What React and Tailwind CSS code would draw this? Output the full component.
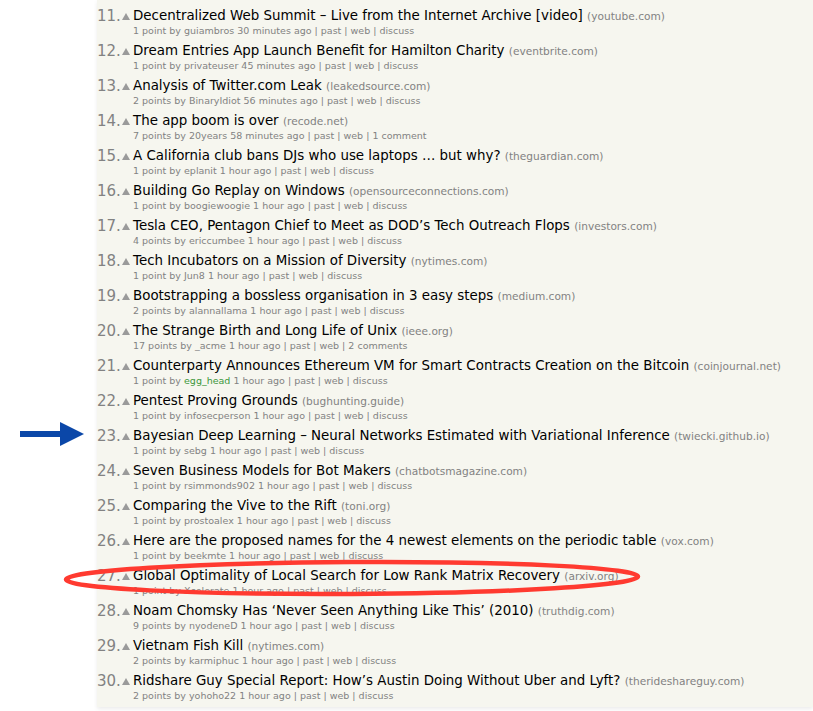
import React from "react";

const items = [
  [11, "Decentralized Web Summit – Live from the Internet Archive [video]", "youtube.com", "1 point", "guiambros", "30 minutes ago", "discuss"],
  [12, "Dream Entries App Launch Benefit for Hamilton Charity", "eventbrite.com", "1 point", "privateuser", "45 minutes ago", "discuss"],
  [13, "Analysis of Twitter.com Leak", "leakedsource.com", "2 points", "BinaryIdiot", "56 minutes ago", "discuss"],
  [14, "The app boom is over", "recode.net", "7 points", "20years", "58 minutes ago", "1 comment"],
  [15, "A California club bans DJs who use laptops … but why?", "theguardian.com", "1 point", "eplanit", "1 hour ago", "discuss"],
  [16, "Building Go Replay on Windows", "opensourceconnections.com", "1 point", "boogiewoogie", "1 hour ago", "discuss"],
  [17, "Tesla CEO, Pentagon Chief to Meet as DOD’s Tech Outreach Flops", "investors.com", "4 points", "ericcumbee", "1 hour ago", "discuss"],
  [18, "Tech Incubators on a Mission of Diversity", "nytimes.com", "1 point", "Jun8", "1 hour ago", "discuss"],
  [19, "Bootstrapping a bossless organisation in 3 easy steps", "medium.com", "2 points", "alannallama", "1 hour ago", "discuss"],
  [20, "The Strange Birth and Long Life of Unix", "ieee.org", "17 points", "_acme", "1 hour ago", "2 comments"],
  [21, "Counterparty Announces Ethereum VM for Smart Contracts Creation on the Bitcoin", "coinjournal.net", "1 point", "egg_head", "1 hour ago", "discuss", true],
  [22, "Pentest Proving Grounds", "bughunting.guide", "1 point", "infosecperson", "1 hour ago", "discuss"],
  [23, "Bayesian Deep Learning – Neural Networks Estimated with Variational Inference", "twiecki.github.io", "1 point", "sebg", "1 hour ago", "discuss"],
  [24, "Seven Business Models for Bot Makers", "chatbotsmagazine.com", "1 point", "rsimmonds902", "1 hour ago", "discuss"],
  [25, "Comparing the Vive to the Rift", "toni.org", "1 point", "prostoalex", "1 hour ago", "discuss"],
  [26, "Here are the proposed names for the 4 newest elements on the periodic table", "vox.com", "1 point", "beekmte", "1 hour ago", "discuss"],
  [27, "Global Optimality of Local Search for Low Rank Matrix Recovery", "arxiv.org", "1 point", "Xcelerate", "1 hour ago", "discuss"],
  [28, "Noam Chomsky Has ‘Never Seen Anything Like This’ (2010)", "truthdig.com", "9 points", "nyodeneD", "1 hour ago", "discuss"],
  [29, "Vietnam Fish Kill", "nytimes.com", "2 points", "karmiphuc", "1 hour ago", "discuss"],
  [30, "Ridshare Guy Special Report: How’s Austin Doing Without Uber and Lyft?", "therideshareguy.com", "2 points", "yohoho22", "1 hour ago", "discuss"],
];

function Row({ item }) {
  const [rank, title, site, points, user, age, comments, isNew] = item;
  return (
    <div className="flex h-[35px]">
      <div className="w-[22px] text-right text-[15px] leading-[18px] text-[#828282]">{rank}.</div>
      <div className="w-[14px] flex justify-center pt-[6px]">
        <svg width="8" height="7" viewBox="0 0 8 7">
          <polygon points="4,0 8,7 0,7" fill="#9a9a9a" />
        </svg>
      </div>
      <div className="flex flex-col">
        <div className="h-[18px] text-[13.4px] leading-[18px] text-black whitespace-nowrap">
          {title} <span className="text-[10.6px] text-[#828282]">({site})</span>
        </div>
        <div className="h-[12px] text-[9.5px] leading-[12px] text-[#828282] whitespace-nowrap">
          {points} by <span className={isNew ? "text-[#3c963c]" : ""}>{user}</span> {age} | past | web | {comments}
        </div>
      </div>
    </div>
  );
}

export default function App() {
  return (
    <div className="relative h-[711px] overflow-hidden bg-white flex" style={{ fontFamily: "'DejaVu Sans', Verdana, sans-serif" }}>
      <div className="w-[97px] shrink-0" />
      <div className="flex-1 h-[707px] bg-[#f6f6ef] pt-[7px] shadow-[0_2px_4px_rgba(0,0,0,0.08)]">
        {items.map((it) => (
          <Row key={it[0]} item={it} />
        ))}
      </div>

      <svg className="absolute left-[18px] top-[421px]" width="68" height="26" viewBox="0 0 68 26">
        <rect x="2" y="10" width="42" height="6" fill="#0b47a8" />
        <polygon points="42,1 66,13 42,25" fill="#0b47a8" />
      </svg>

      <svg className="absolute left-[60px] top-[556px]" width="590" height="46" viewBox="0 0 590 46">
        <ellipse cx="292" cy="22" rx="286" ry="16" fill="none" stroke="#ff3a30" strokeWidth="4.5" transform="rotate(-0.3 292 22)" />
      </svg>
    </div>
  );
}
